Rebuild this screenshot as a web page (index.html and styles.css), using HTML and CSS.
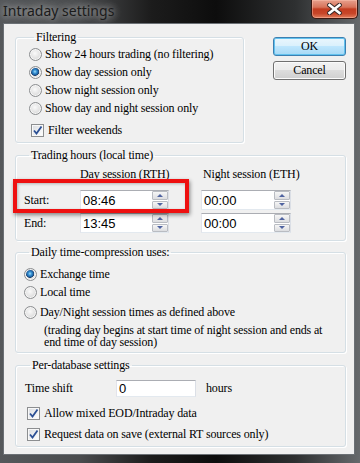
FILE: index.html
```html
<!DOCTYPE html>
<html>
<head>
<meta charset="utf-8">
<link rel="stylesheet" href="styles.css">
</head>
<body>
<div class="window">
  <div class="titlebar">
    <span class="title">Intraday settings</span>
    <div class="close">
      <svg width="15" height="12" viewBox="0 0 15 12"><path d="M2.5 2 L12.5 10 M12.5 2 L2.5 10" stroke="#3a2a28" stroke-width="4.6" stroke-linecap="square"/><path d="M2.5 2 L12.5 10 M12.5 2 L2.5 10" stroke="#ffffff" stroke-width="2.6" stroke-linecap="square"/></svg>
    </div>
  </div>
  <div class="client">
    <div class="top-row">
      <fieldset class="group filtering">
        <legend>Filtering</legend>
        <div class="opt"><span class="radio"></span><span>Show 24 hours trading (no filtering)</span></div>
        <div class="opt"><span class="radio checked"></span><span>Show day session only</span></div>
        <div class="opt"><span class="radio"></span><span>Show night session only</span></div>
        <div class="opt"><span class="radio"></span><span>Show day and night session only</span></div>
        <div class="opt chk-row"><span class="check"><svg width="11" height="11" viewBox="0 0 11 11"><path d="M2 5.5 L4.5 8.5 L9.5 1.5" fill="none" stroke="#2b4f94" stroke-width="1.8"/></svg></span><span>Filter weekends</span></div>
      </fieldset>
      <div class="buttons">
        <button class="btn default">OK</button>
        <button class="btn">Cancel</button>
      </div>
    </div>

    <fieldset class="group trading">
      <legend>Trading hours (local time)</legend>
      <div class="hours">
        <span></span><span class="colhead">Day session (RTH)</span><span></span><span class="colhead night">Night session (ETH)</span>
        <span class="lbl">Start:</span>
        <div class="textbox spin"><span class="val">08:46</span><span class="spinner"><span class="sb up"></span><span class="sb down"></span></span></div>
        <span></span>
        <div class="textbox spin"><span class="val">00:00</span><span class="spinner"><span class="sb up"></span><span class="sb down"></span></span></div>
        <span class="lbl">End:</span>
        <div class="textbox spin"><span class="val">13:45</span><span class="spinner"><span class="sb up"></span><span class="sb down"></span></span></div>
        <span></span>
        <div class="textbox spin"><span class="val">00:00</span><span class="spinner"><span class="sb up"></span><span class="sb down"></span></span></div>
      </div>
    </fieldset>

    <fieldset class="group daily">
      <legend>Daily time-compression uses:</legend>
      <div class="opt"><span class="radio checked"></span><span>Exchange time</span></div>
      <div class="opt"><span class="radio"></span><span>Local time</span></div>
      <div class="opt third"><span class="radio"></span><span>Day/Night session times as defined above</span></div>
      <p class="note">(trading day begins at start time of night session and ends at end time of day session)</p>
    </fieldset>

    <fieldset class="group perdb">
      <legend>Per-database settings</legend>
      <div class="shift-row">
        <span class="lbl">Time shift</span>
        <div class="textbox shift"><span class="val">0</span></div>
        <span class="lbl hours-lbl">hours</span>
      </div>
      <div class="opt chk-row2 first"><span class="check"><svg width="11" height="11" viewBox="0 0 11 11"><path d="M2 5.5 L4.5 8.5 L9.5 1.5" fill="none" stroke="#2b4f94" stroke-width="1.8"/></svg></span><span>Allow mixed EOD/Intraday data</span></div>
      <div class="opt chk-row2"><span class="check"><svg width="11" height="11" viewBox="0 0 11 11"><path d="M2 5.5 L4.5 8.5 L9.5 1.5" fill="none" stroke="#2b4f94" stroke-width="1.8"/></svg></span><span>Request data on save (external RT sources only)</span></div>
    </fieldset>

    <div class="highlight"></div>
  </div>
</div>
</body>
</html>
```
FILE: styles.css
```css
* { box-sizing: border-box; }
html, body { margin: 0; padding: 0; }
body {
  width: 360px;
  height: 463px;
  overflow: hidden;
  font-family: "Liberation Serif", "Times New Roman", serif;
  font-size: 12px;
  letter-spacing: -0.15px;
  color: #000;
}
.window {
  width: 360px;
  height: 463px;
  display: flex;
  flex-direction: column;
  padding: 0 5px 8px 3px;
  background: linear-gradient(to right, #55585b 0%, #4a4c4e 22%, #1c1c1c 42%, #0d0d0d 60%, #2e3031 82%, #66696c 100%);
}
.titlebar {
  height: 23px;
  display: flex;
  justify-content: space-between;
  align-items: flex-start;
  margin-right: -3px;
}
.title {
  font-family: "Noto Sans", "Open Sans", sans-serif;
  font-size: 14px;
  letter-spacing: 0;
  line-height: 22px;
  color: #1b1b1b;
  text-shadow: 0 0 6px rgba(255,255,255,0.55), 0 0 12px rgba(255,255,255,0.4), 0 0 18px rgba(255,255,255,0.3);
}
.close {
  width: 47px;
  height: 19px;
  border: 1px solid #3b1710;
  border-top: none;
  border-radius: 0 0 5px 5px;
  background: linear-gradient(#e7a08d 0%, #d7735a 40%, #c33c20 50%, #c84629 75%, #e27d5c 100%);
  box-shadow: inset 0 0 0 1px rgba(255,200,180,0.45);
  display: flex;
  align-items: center;
  justify-content: center;
}
.client {
  position: relative;
  flex: 1;
  background: #f0f0f0;
  border: 1px solid #6b7075;
  padding: 6px 0 0 11px;
}
.top-row {
  display: flex;
  align-items: flex-start;
}
.group {
  margin: 0;
  border: 1px solid #d5dfe5;
  border-radius: 3px;
  box-shadow: 1px 1px 0 #fff, inset 1px 1px 0 #fff;
  padding: 0;
  min-width: 0;
}
.group legend {
  padding: 0 2px;
  margin-left: 5px;
  line-height: 14px;
  height: 14px;
}
.filtering {
  width: 229px;
  padding: 1px 0 3px 13px;
}
.opt {
  display: flex;
  align-items: center;
  height: 18px;
  gap: 3px;
}
.chk-row { margin-top: 4px; padding-left: 2px; gap: 4px; }
.radio {
  width: 13px;
  height: 13px;
  flex: none;
  border-radius: 50%;
  border: 1px solid #8c8e90;
  background: radial-gradient(circle at 45% 40%, #fafafa 0, #e6e6e6 45%, #cdcdcd 100%);
  box-shadow: inset 0 0 0 1px #f6f6f6;
}
.radio.checked {
  background:
    radial-gradient(circle at 45% 42%, #a6def8 0, #3d98d8 1.6px, #1d62a4 3.2px, #24436a 4px, rgba(0,0,0,0) 4.4px),
    radial-gradient(circle at 45% 40%, #fafafa 0, #e6e6e6 45%, #cdcdcd 100%);
}
.check {
  width: 13px;
  height: 13px;
  flex: none;
  border: 1px solid #8c8e90;
  background: linear-gradient(135deg, #d8dbe0 0%, #f4f5f6 70%, #ffffff 100%);
  box-shadow: inset 0 0 0 1px #f8f8f8;
  display: flex;
  align-items: center;
  justify-content: center;
}
.buttons {
  display: flex;
  flex-direction: column;
  gap: 5px;
  margin-left: 29px;
  margin-top: 7px;
}
.btn {
  width: 73px;
  height: 19px;
  padding: 0;
  font-family: "Liberation Serif", "Times New Roman", serif;
  font-size: 12px;
  letter-spacing: -0.15px;
  color: #000;
  border: 1px solid #707070;
  border-radius: 3px;
  background: linear-gradient(#f2f2f2 0%, #ebebeb 50%, #dddddd 50%, #cfcfcf 100%);
  box-shadow: inset 0 0 0 1px #fbfbfb;
}
.btn.default {
  border-color: #3c7fb1;
  background: linear-gradient(#eaf6fd 0%, #d9f0fc 50%, #bee6fd 50%, #a7d9f5 100%);
  box-shadow: inset 0 0 0 1px #62c2ee;
}
.trading {
  width: 331px;
  margin-top: 5px;
  padding: 3px 0 7px 8px;
}
.hours {
  display: grid;
  grid-template-columns: 56px 89px 32px 90px;
  grid-template-rows: 22px 20px 20px;
  row-gap: 3px;
  align-items: center;
}
.hours .colhead {
  white-space: nowrap;
  align-self: start;
  line-height: 18px;
}
.hours .night { padding-left: 2px; }
.textbox {
  height: 20px;
  border: 1px solid;
  border-color: #abadb3 #dbdfe6 #e3e9ef #e2e3ea;
  background: #fff;
  display: flex;
  align-items: center;
  justify-content: space-between;
  font-family: "Liberation Sans", Arial, sans-serif;
  font-size: 13px;
  letter-spacing: 0;
  padding-left: 2px;
}
.spinner {
  width: 16px;
  height: 18px;
  display: flex;
  flex-direction: column;
  gap: 1px;
}
.sb {
  flex: 1;
  border: 1px solid #b9bcc2;
  border-radius: 1px;
  background: linear-gradient(#f6f6f6, #dcdde0);
  display: flex;
  align-items: center;
  justify-content: center;
}
.sb::after {
  content: "";
  width: 0;
  height: 0;
  border-left: 3px solid transparent;
  border-right: 3px solid transparent;
}
.sb.up::after { border-bottom: 3px solid #4f63a0; }
.sb.down::after { border-top: 3px solid #4f63a0; }
.daily {
  width: 331px;
  margin-top: 4px;
  padding: 6px 0 4px 8px;
}
.daily .third { margin-top: 2px; }
.note {
  margin: 3px 0 0 20px;
  width: 285px;
  line-height: 12px;
}
.perdb {
  width: 331px;
  margin-top: 5px;
  padding: 8px 0 3px 9px;
}
.shift-row {
  display: flex;
  align-items: center;
  height: 17px;
}
.shift-row .lbl { width: 91px; }
.textbox.shift { width: 80px; height: 17px; }
.hours-lbl { margin-left: 10px; }
.chk-row2 { margin-top: 3px; padding-left: 2px; gap: 4px; height: 18px; }
.chk-row2.first { margin-top: 7px; }
.highlight {
  position: absolute;
  left: 9px;
  top: 155px;
  width: 176px;
  height: 34px;
  border: 4px solid #ee1010;
  box-shadow: 1px 2px 4px rgba(0,0,0,0.45), inset 1px 1px 3px rgba(0,0,0,0.25);
  pointer-events: none;
}
```
